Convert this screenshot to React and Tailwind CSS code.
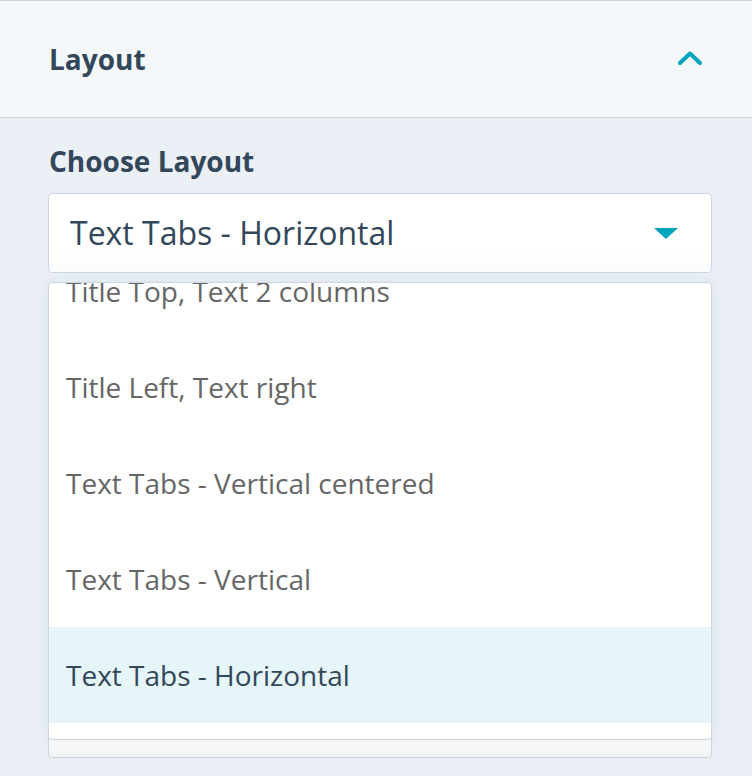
const options = [
  "Title Top, Text 2 columns",
  "Title Left, Text right",
  "Text Tabs - Vertical centered",
  "Text Tabs - Vertical",
  "Text Tabs - Horizontal",
];

const selected = "Text Tabs - Horizontal";

export default function App() {
  return (
    <div className="h-[776px] w-[752px] overflow-hidden bg-[#eaf0f6] font-['Open_Sans',sans-serif] text-[#33475b]">
      <div className="flex h-[118px] items-center justify-between border-y border-[#cbd6e2] bg-[#f5f8fa] pl-[49px] pr-[49px]">
        <h2 className="text-[28px] font-bold leading-[34px]">Layout</h2>
        <svg width="26" height="16" viewBox="0 0 26 16" className="mt-[-2px]">
          <path d="M3 13 L13 3.5 L23 13" fill="none" stroke="#00a4bd" strokeWidth="4" strokeLinecap="round" strokeLinejoin="round" />
        </svg>
      </div>

      <div className="pl-[48px] pr-[40px] pt-[26px]">
        <label className="block pl-[1px] text-[28px] font-bold leading-[34px]">Choose Layout</label>

        <div className="mt-[15px] flex h-[80px] items-center justify-between rounded-[4px] border border-[#cbd6e2] bg-[linear-gradient(#ffffff_70%,#fbfcfd)] pl-[21px] pr-[33px]">
          <span className="text-[32px] leading-[40px]">{selected}</span>
          <svg width="24" height="11" viewBox="0 0 24 11">
            <path d="M0 0 H24 L12 11 Z" fill="#00a4bd" />
          </svg>
        </div>

        <div className="relative mt-[9px]">
          <div className="relative z-10 h-[458px] overflow-hidden rounded-[4px] border border-[#cbd6e2] bg-white shadow-[0_0_14px_rgba(45,62,80,0.08)]">
            <div className="-mt-[40px]">
              {options.map((o) => (
                <div
                  key={o}
                  className={`flex h-[96px] items-center pl-[17px] text-[28px] ${
                    o === selected ? "bg-[#e5f5f8] text-[#33475b]" : "text-[#666666]"
                  }`}
                >
                  {o}
                </div>
              ))}
            </div>
          </div>
          <div className="-mt-[2px] h-[20px] rounded-b-[4px] border border-t-0 border-[#cbd6e2] bg-[linear-gradient(#ffffff,#f1f3f5)]" />
        </div>
      </div>
    </div>
  );
}
